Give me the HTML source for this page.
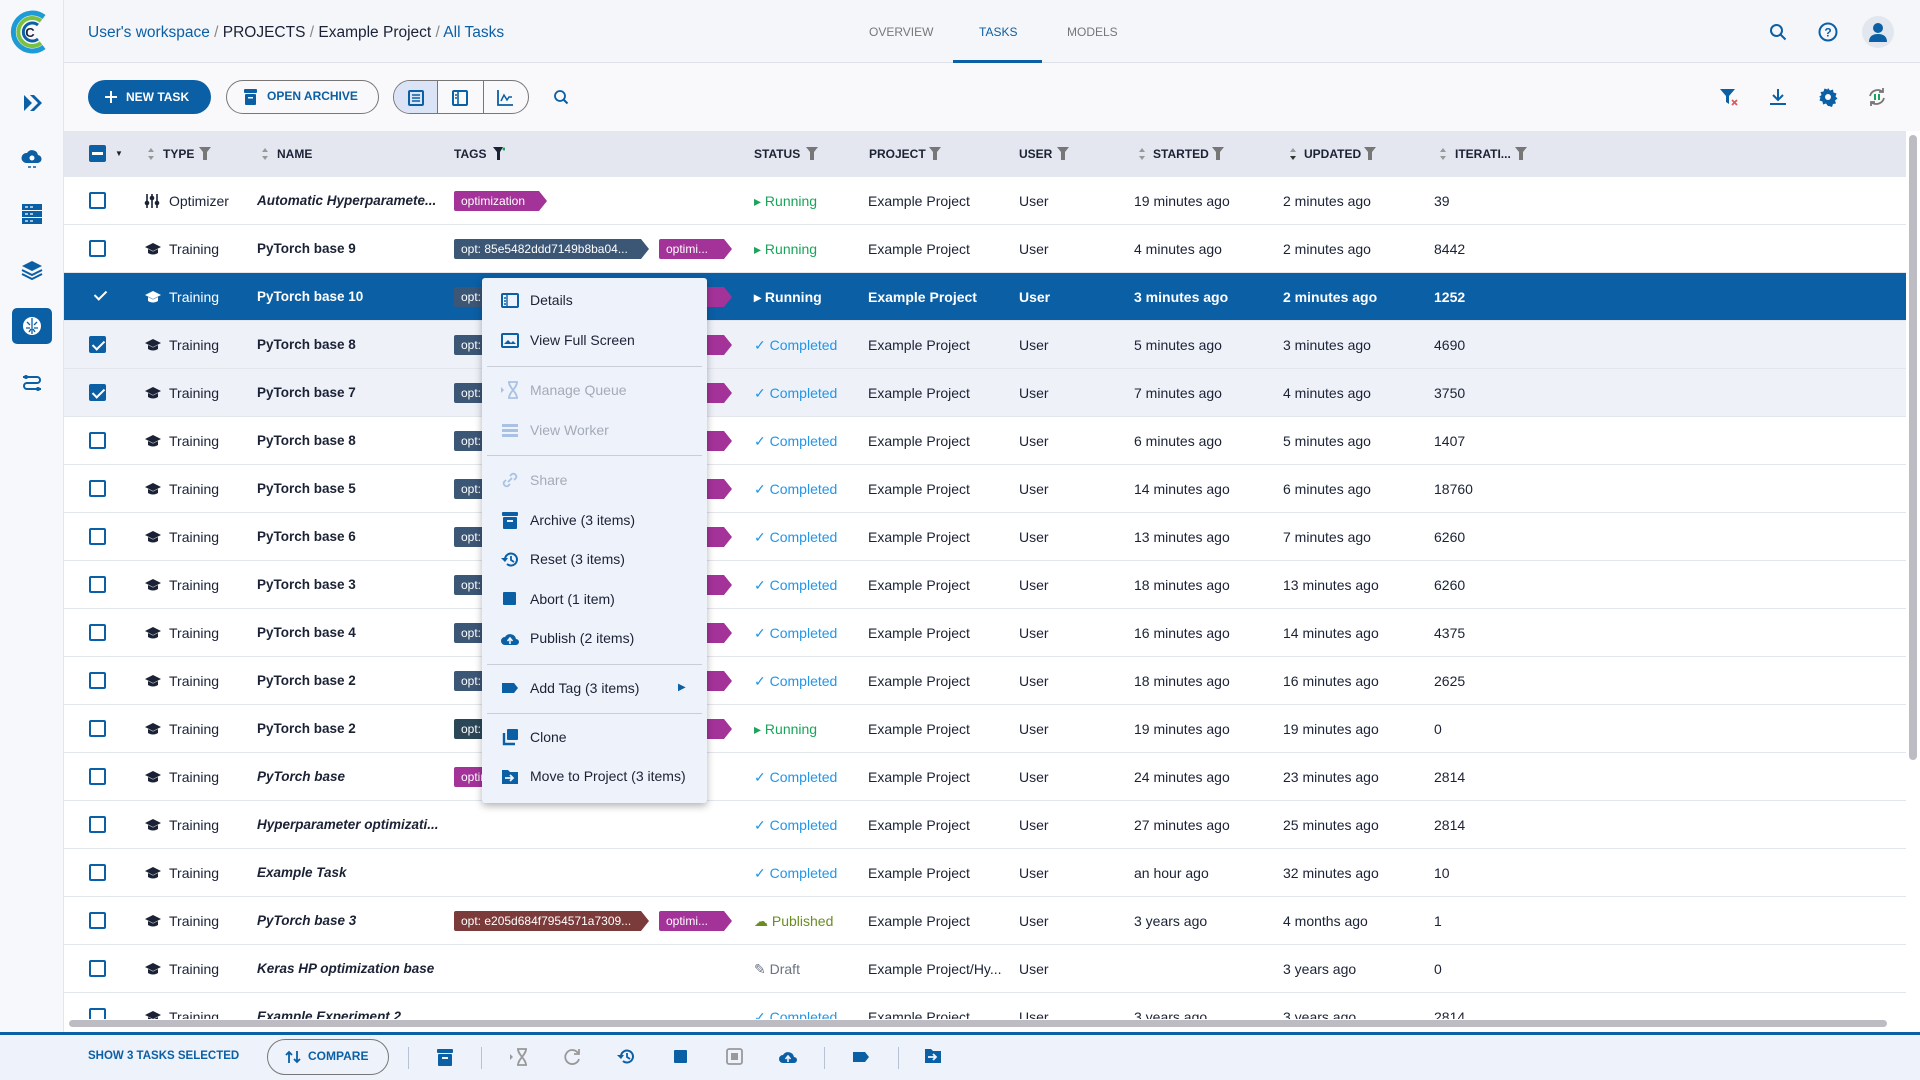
<!DOCTYPE html>
<html><head><meta charset="utf-8"><style>
*{box-sizing:border-box;margin:0;padding:0}
body{width:1920px;height:1080px;overflow:hidden;background:#f5f6fa;font-family:"Liberation Sans",sans-serif;color:#1b2235;position:relative}
.abs{position:absolute}
.side{left:0;top:0;width:64px;height:1080px;background:#f7f8fb;border-right:1px solid #e3e5ec}
.hdr{left:64px;top:0;width:1856px;height:63px;background:#f5f6fa;border-bottom:1px solid #dfe1e8}
.tb{left:64px;top:63px;width:1856px;height:68px;background:#f9f9fc}
.th{left:64px;top:131px;width:1842px;height:46px;background:#e4e7f0;font-size:12px;font-weight:bold;color:#1b2235}
.th span{position:absolute;top:16px}
.th svg{position:absolute;top:16px}
.row{position:absolute;left:64px;width:1842px;height:48px;background:#fff;border-bottom:1px solid #e4e6ee;font-size:14px}
.row.sel{background:#eef1f8}
.row.act{background:#0b5fa5;color:#fff}
.row>*{position:absolute;top:16px;white-space:nowrap}
.cb{left:25px;top:15px!important;width:17px;height:17px;border:2px solid #0b5fa5;border-radius:2px;background:#fff}
.cb.on{background:#0b5fa5}
.cb.on::after,.chk::after{content:"";position:absolute;left:4px;top:0px;width:5px;height:10px;border:solid #fff;border-width:0 2px 2px 0;transform:rotate(45deg)}
.chk{left:29px;top:15px!important;width:17px;height:17px}
.nm{left:193px;font-weight:bold;font-size:13.5px}
.it{font-style:italic}
.tag{top:14px!important;height:20px;line-height:20px;font-size:12px;color:#fff;padding:0 14px 0 7px;clip-path:polygon(0 0,calc(100% - 8px) 0,100% 50%,calc(100% - 8px) 100%,0 100%);border-radius:2px;overflow:hidden}
.pk{background:#a43399;width:73px}.dk{background:#3c5675}.br{background:#7c3b3b}.tl{background:#2b4757}
.st{left:690px}
.run{color:#1aa35a}.cmp{color:#2196e8}.pub{color:#6a8d22}.drf{color:#6b7280}
.row.act .run{color:#fff}
.c-ty{left:105px}.c-pr{left:804px}.c-us{left:955px}.c-sa{left:1070px}.c-up{left:1219px}.c-it{left:1370px}
.ico{position:absolute}
.menu{left:482px;top:278px;width:225px;height:525px;background:#eef2fa;border-radius:3px;box-shadow:0 3px 8px rgba(0,0,0,.3);font-size:14px;color:#1b2235}
.menu .mi{position:absolute;left:48px}
.menu .dis{color:#a4abb8}
.menu .dv{position:absolute;left:5px;width:215px;height:1px;background:#c9ced8}
.bot{left:0;top:1032px;width:1920px;height:48px;background:#eef2fa;border-top:3px solid #0b5fa5}
.vd{position:absolute;top:12px;width:1px;height:22px;background:#b7c2d4}
</style></head><body>

<div class="abs side"></div>
<svg class="abs" style="left:8px;top:9px" width="44" height="46" viewBox="0 0 44 46"><path d="M36 8 A19 19 0 1 0 36 38" fill="none" stroke="#1e9ad6" stroke-width="5"/><path d="M33 12 A14 14 0 1 0 33 34" fill="none" stroke="#7ac143" stroke-width="4"/><path d="M30 16 A9 9 0 1 0 30 30" fill="none" stroke="#0b5fa5" stroke-width="3"/><text x="22" y="28" font-size="13" font-weight="bold" fill="#1b2235" text-anchor="middle" font-family="Liberation Sans">C</text></svg>
<svg class="abs" style="left:22px;top:93px" width="20" height="20" viewBox="0 0 20 20"><path d="M2 2 L10 10 L2 18 Z" fill="#0b5fa5"/><path d="M8 2 h4 l8 8 -8 8 h-4 l8-8z" fill="#0b5fa5"/></svg>
<svg class="abs" style="left:20px;top:148px" width="24" height="22" viewBox="0 0 24 22"><path d="M6 15a5 5 0 0 1 1-10 6 6 0 0 1 11 2 4 4 0 0 1-1 8z" fill="#0b5fa5"/><circle cx="12" cy="10" r="2.5" fill="#fff"/><path d="M8 19h3M13 19h3" stroke="#0b5fa5" stroke-width="1.5"/></svg>
<svg class="abs" style="left:21px;top:203px" width="22" height="22" viewBox="0 0 22 22"><rect x="1" y="1" width="20" height="6" fill="#0b5fa5"/><rect x="1" y="8" width="20" height="6" fill="#0b5fa5"/><rect x="1" y="15" width="20" height="6" fill="#0b5fa5"/><path d="M4 4h3M9 4h3M4 11h3M9 11h3M4 18h3M9 18h3" stroke="#fff" stroke-width="1.2"/></svg>
<svg class="abs" style="left:21px;top:260px" width="22" height="22" viewBox="0 0 22 22"><path d="M11 1 L21 6 L11 11 L1 6Z" fill="#0b5fa5"/><path d="M1 10l10 5 10-5M1 14l10 5 10-5" fill="none" stroke="#0b5fa5" stroke-width="2"/></svg>
<div class="abs" style="left:12px;top:308px;width:40px;height:36px;background:#0b5fa5;border-radius:5px"></div>
<svg class="abs" style="left:21px;top:315px" width="22" height="22" viewBox="0 0 22 22"><circle cx="11" cy="11" r="9" fill="#fff"/><path d="M11 3v16M6 7l3 3M16 7l-3 3M5 13h4M13 13h4M8 17l2-3M14 17l-2-3" stroke="#0b5fa5" stroke-width="1.3"/></svg>
<svg class="abs" style="left:21px;top:372px" width="22" height="22" viewBox="0 0 22 22"><path d="M2 5h14a3 3 0 0 1 0 6H6a3 3 0 0 0 0 6h14" fill="none" stroke="#0b5fa5" stroke-width="2"/><circle cx="5" cy="5" r="2" fill="#0b5fa5"/><circle cx="17" cy="17" r="2" fill="#0b5fa5"/></svg>

<div class="abs hdr"></div>
<div class="abs" style="left:88px;top:24px;font-size:15.5px;white-space:nowrap"><span style="color:#0b5fa5">User's workspace</span> <span style="color:#888">/</span> PROJECTS <span style="color:#888">/</span> Example Project <span style="color:#888">/</span> <span style="color:#0b5fa5">All Tasks</span></div>
<div class="abs" style="left:869px;top:25px;font-size:12px;color:#777">OVERVIEW</div>
<div class="abs" style="left:979px;top:25px;font-size:12px;color:#0b5fa5">TASKS</div>
<div class="abs" style="left:953px;top:60px;width:89px;height:3px;background:#0b5fa5"></div>
<div class="abs" style="left:1067px;top:25px;font-size:12px;color:#777">MODELS</div>
<svg class="abs" style="left:1769px;top:23px" width="18" height="18" viewBox="0 0 18 18"><circle cx="7.5" cy="7.5" r="5.5" fill="none" stroke="#0b5fa5" stroke-width="2"/><path d="M11.5 11.5l5 5" stroke="#0b5fa5" stroke-width="2"/></svg>
<svg class="abs" style="left:1818px;top:22px" width="20" height="20" viewBox="0 0 20 20"><circle cx="10" cy="10" r="8.5" fill="none" stroke="#0b5fa5" stroke-width="2"/><text x="10" y="14.5" font-size="12" font-weight="bold" fill="#0b5fa5" text-anchor="middle" font-family="Liberation Sans">?</text></svg>
<div class="abs" style="left:1862px;top:16px;width:32px;height:32px;border-radius:50%;background:#e2e6ee"></div>
<svg class="abs" style="left:1866px;top:20px" width="24" height="24" viewBox="0 0 24 24"><circle cx="12" cy="8" r="5" fill="#0b5fa5"/><path d="M3 22c0-6 4-8 9-8s9 2 9 8z" fill="#0b5fa5"/></svg>

<div class="abs tb"></div>
<div class="abs" style="left:88px;top:80px;width:123px;height:34px;border-radius:17px;background:#0b5fa5;color:#fff;font-size:12px;font-weight:bold;line-height:34px;padding-left:38px">NEW TASK</div>
<div class="abs" style="left:105px;top:96px;width:12px;height:2px;background:#fff"></div><div class="abs" style="left:110px;top:91px;width:2px;height:12px;background:#fff"></div>
<div class="abs" style="left:226px;top:80px;width:153px;height:34px;border-radius:17px;border:1.5px solid #777;color:#0b5fa5;font-size:12px;font-weight:bold;line-height:31px;padding-left:40px">OPEN ARCHIVE</div>
<svg class="abs" style="left:244px;top:89px" width="13" height="16" viewBox="0 0 13 16"><rect x="0" y="0" width="13" height="4" rx="1" fill="#0b5fa5"/><rect x="1" y="5" width="11" height="11" rx="1" fill="#0b5fa5"/><rect x="4" y="8" width="5" height="1.5" fill="#fff"/></svg>
<div class="abs" style="left:393px;top:80px;width:136px;height:34px;border-radius:17px;border:1.5px solid #777;overflow:hidden"><div style="position:absolute;left:0;top:0;width:44px;height:34px;background:#dbe3f7;border-right:1px solid #777"></div><div style="position:absolute;left:89px;top:0;width:1px;height:34px;background:#777"></div></div>
<svg class="abs" style="left:408px;top:90px" width="16" height="16"><rect x="1" y="1" width="14" height="14" rx="1" fill="none" stroke="#0b5fa5" stroke-width="2"/><path d="M4 5h8M4 8h8M4 11h8" stroke="#0b5fa5" stroke-width="1.6"/></svg>
<svg class="abs" style="left:452px;top:90px" width="16" height="16"><rect x="1" y="1" width="14" height="14" rx="1" fill="none" stroke="#0b5fa5" stroke-width="2"/><path d="M6 1v14M3 5h2M3 8h2" stroke="#0b5fa5" stroke-width="1.6"/></svg>
<svg class="abs" style="left:497px;top:90px" width="16" height="16"><path d="M1 0v15h15" fill="none" stroke="#0b5fa5" stroke-width="1.8"/><path d="M4 11l3-6 3 5 2-3h3" fill="none" stroke="#0b5fa5" stroke-width="1.5"/></svg>
<svg class="abs" style="left:553px;top:89px" width="16" height="16"><circle cx="7" cy="7" r="5" fill="none" stroke="#0b5fa5" stroke-width="1.8"/><path d="M10.5 10.5l4 4" stroke="#0b5fa5" stroke-width="2"/></svg>
<svg class="abs" style="left:1719px;top:88px" width="20" height="18"><path d="M1 1h15l-6 7v8l-3-2v-6z" fill="#0b5fa5"/><path d="M13 12l5 5M18 12l-5 5" stroke="#e05a5a" stroke-width="1.8"/></svg>
<svg class="abs" style="left:1769px;top:88px" width="18" height="18"><path d="M9 1v11M4 7l5 5 5-5" fill="none" stroke="#0b5fa5" stroke-width="2"/><path d="M1 16h16" stroke="#0b5fa5" stroke-width="2"/></svg>
<svg class="abs" style="left:1818px;top:87px" width="20" height="20" viewBox="0 0 20 20"><path d="M10 1l2 2.5 3-1 .5 3 3 1-1 3 2 2-2.5 2 1 3-3 .5-1 3-3-1L10 19l-2-2.5-3 1-.5-3-3-1 1-3L1 10l2.5-2-1-3 3-.5 1-3 3 1z" fill="#0b5fa5"/><circle cx="10" cy="10" r="3" fill="#f9f9fc"/></svg>
<svg class="abs" style="left:1867px;top:87px" width="20" height="20" viewBox="0 0 20 20"><path d="M16 5a8 8 0 0 0-13 4M4 15a8 8 0 0 0 13-4" fill="none" stroke="#777" stroke-width="1.8"/><path d="M16 1v4h-4M4 19v-4h4" fill="none" stroke="#777" stroke-width="1.8"/><path d="M8 7v6M12 7v6" stroke="#1aa35a" stroke-width="2"/></svg>

<div class="abs th">
<div style="position:absolute;left:25px;top:14px;width:17px;height:17px;background:#0b5fa5;border-radius:2px"><div style="position:absolute;left:3px;top:7px;width:11px;height:3px;background:#fff"></div></div>
<span style="left:51px;top:18px;font-size:8px;color:#1b2235">▼</span>
<svg style="left:83px" width="8" height="14"><path d="M4 1l3 4H1zM4 13l3-4H1z" fill="#999"/></svg><span style="left:99px">TYPE</span>
<svg style="left:135px" width="12" height="13"><path d="M0 0h12L8 5v8H4V5z" fill="#777"/></svg>
<svg style="left:197px" width="8" height="14"><path d="M4 1l3 4H1zM4 13l3-4H1z" fill="#999"/></svg><span style="left:213px">NAME</span>
<span style="left:390px">TAGS</span><svg style="left:429px" width="12" height="13"><path d="M0 0h10L7 5v8H4V5z" fill="#1b2235"/><circle cx="11" cy="2" r="1.5" fill="#1aa35a"/></svg>
<span style="left:690px">STATUS</span><svg style="left:742px" width="12" height="13"><path d="M0 0h12L8 5v8H4V5z" fill="#777"/></svg>
<span style="left:805px">PROJECT</span><svg style="left:865px" width="12" height="13"><path d="M0 0h12L8 5v8H4V5z" fill="#777"/></svg>
<span style="left:955px">USER</span><svg style="left:993px" width="12" height="13"><path d="M0 0h12L8 5v8H4V5z" fill="#777"/></svg>
<svg style="left:1074px" width="8" height="14"><path d="M4 1l3 4H1zM4 13l3-4H1z" fill="#999"/></svg><span style="left:1089px">STARTED</span><svg style="left:1148px" width="12" height="13"><path d="M0 0h12L8 5v8H4V5z" fill="#777"/></svg>
<svg style="left:1225px" width="8" height="14"><path d="M4 1l3 4H1z" fill="#999"/><path d="M4 13l3-4H1z" fill="#333"/></svg><span style="left:1240px">UPDATED</span><svg style="left:1300px" width="12" height="13"><path d="M0 0h12L8 5v8H4V5z" fill="#777"/></svg>
<svg style="left:1375px" width="8" height="14"><path d="M4 1l3 4H1zM4 13l3-4H1z" fill="#999"/></svg><span style="left:1391px">ITERATI...</span><svg style="left:1451px" width="12" height="13"><path d="M0 0h12L8 5v8H4V5z" fill="#777"/></svg>
</div>

<div class="row" style="top:177px"><div class="cb"></div><svg style="left:80px;top:16px" width="16" height="16"><path d="M3 1v14M8 1v14M13 1v14" stroke="#1b2235" stroke-width="1.6"/><circle cx="3" cy="10" r="2.3" fill="#1b2235"/><circle cx="8" cy="5" r="2.3" fill="#1b2235"/><circle cx="13" cy="10" r="2.3" fill="#1b2235"/></svg><span class="c-ty">Optimizer</span><span class="nm it">Automatic Hyperparamete...</span><span class="tag pk" style="left:390px;width:93px">optimization</span><span class="st run">▸ Running</span><span class="c-pr">Example Project</span><span class="c-us">User</span><span class="c-sa">19 minutes ago</span><span class="c-up">2 minutes ago</span><span class="c-it">39</span></div>

<div class="row" style="top:225px"><div class="cb"></div><span class="c-ty">Training</span><span class="nm">PyTorch base 9</span><span class="tag dk" style="left:390px;width:195px">opt: 85e5482ddd7149b8ba04...</span><span class="tag pk" style="left:595px">optimi...</span><span class="st run">▸ Running</span><span class="c-pr">Example Project</span><span class="c-us">User</span><span class="c-sa">4 minutes ago</span><span class="c-up">2 minutes ago</span><span class="c-it">8442</span></div>

<div class="row act" style="top:273px"><div class="chk"></div><span class="c-ty">Training</span><span class="nm">PyTorch base 10</span><span class="tag dk" style="left:390px;width:195px">opt:</span><span class="tag pk" style="left:595px">optimi...</span><span class="st run" style="font-weight:bold">▸ Running</span><span class="c-pr" style="font-weight:bold">Example Project</span><span class="c-us" style="font-weight:bold">User</span><span class="c-sa" style="font-weight:bold">3 minutes ago</span><span class="c-up" style="font-weight:bold">2 minutes ago</span><span class="c-it" style="font-weight:bold">1252</span></div>

<div class="row sel" style="top:321px"><div class="cb on"></div><span class="c-ty">Training</span><span class="nm">PyTorch base 8</span><span class="tag dk" style="left:390px;width:195px">opt:</span><span class="tag pk" style="left:595px">optimi...</span><span class="st cmp">✓ Completed</span><span class="c-pr">Example Project</span><span class="c-us">User</span><span class="c-sa">5 minutes ago</span><span class="c-up">3 minutes ago</span><span class="c-it">4690</span></div>

<div class="row sel" style="top:369px"><div class="cb on"></div><span class="c-ty">Training</span><span class="nm">PyTorch base 7</span><span class="tag dk" style="left:390px;width:195px">opt:</span><span class="tag pk" style="left:595px">optimi...</span><span class="st cmp">✓ Completed</span><span class="c-pr">Example Project</span><span class="c-us">User</span><span class="c-sa">7 minutes ago</span><span class="c-up">4 minutes ago</span><span class="c-it">3750</span></div>

<div class="row" style="top:417px"><div class="cb"></div><span class="c-ty">Training</span><span class="nm">PyTorch base 8</span><span class="tag dk" style="left:390px;width:195px">opt:</span><span class="tag pk" style="left:595px">optimi...</span><span class="st cmp">✓ Completed</span><span class="c-pr">Example Project</span><span class="c-us">User</span><span class="c-sa">6 minutes ago</span><span class="c-up">5 minutes ago</span><span class="c-it">1407</span></div>

<div class="row" style="top:465px"><div class="cb"></div><span class="c-ty">Training</span><span class="nm">PyTorch base 5</span><span class="tag dk" style="left:390px;width:195px">opt:</span><span class="tag pk" style="left:595px">optimi...</span><span class="st cmp">✓ Completed</span><span class="c-pr">Example Project</span><span class="c-us">User</span><span class="c-sa">14 minutes ago</span><span class="c-up">6 minutes ago</span><span class="c-it">18760</span></div>

<div class="row" style="top:513px"><div class="cb"></div><span class="c-ty">Training</span><span class="nm">PyTorch base 6</span><span class="tag dk" style="left:390px;width:195px">opt:</span><span class="tag pk" style="left:595px">optimi...</span><span class="st cmp">✓ Completed</span><span class="c-pr">Example Project</span><span class="c-us">User</span><span class="c-sa">13 minutes ago</span><span class="c-up">7 minutes ago</span><span class="c-it">6260</span></div>

<div class="row" style="top:561px"><div class="cb"></div><span class="c-ty">Training</span><span class="nm">PyTorch base 3</span><span class="tag dk" style="left:390px;width:195px">opt:</span><span class="tag pk" style="left:595px">optimi...</span><span class="st cmp">✓ Completed</span><span class="c-pr">Example Project</span><span class="c-us">User</span><span class="c-sa">18 minutes ago</span><span class="c-up">13 minutes ago</span><span class="c-it">6260</span></div>

<div class="row" style="top:609px"><div class="cb"></div><span class="c-ty">Training</span><span class="nm">PyTorch base 4</span><span class="tag dk" style="left:390px;width:195px">opt:</span><span class="tag pk" style="left:595px">optimi...</span><span class="st cmp">✓ Completed</span><span class="c-pr">Example Project</span><span class="c-us">User</span><span class="c-sa">16 minutes ago</span><span class="c-up">14 minutes ago</span><span class="c-it">4375</span></div>

<div class="row" style="top:657px"><div class="cb"></div><span class="c-ty">Training</span><span class="nm">PyTorch base 2</span><span class="tag dk" style="left:390px;width:195px">opt:</span><span class="tag pk" style="left:595px">optimi...</span><span class="st cmp">✓ Completed</span><span class="c-pr">Example Project</span><span class="c-us">User</span><span class="c-sa">18 minutes ago</span><span class="c-up">16 minutes ago</span><span class="c-it">2625</span></div>

<div class="row" style="top:705px"><div class="cb"></div><span class="c-ty">Training</span><span class="nm">PyTorch base 2</span><span class="tag tl" style="left:390px;width:195px">opt:</span><span class="tag pk" style="left:595px">optimi...</span><span class="st run">▸ Running</span><span class="c-pr">Example Project</span><span class="c-us">User</span><span class="c-sa">19 minutes ago</span><span class="c-up">19 minutes ago</span><span class="c-it">0</span></div>

<div class="row" style="top:753px"><div class="cb"></div><span class="c-ty">Training</span><span class="nm it">PyTorch base</span><span class="tag pk" style="left:390px">optimi</span><span class="st cmp">✓ Completed</span><span class="c-pr">Example Project</span><span class="c-us">User</span><span class="c-sa">24 minutes ago</span><span class="c-up">23 minutes ago</span><span class="c-it">2814</span></div>

<div class="row" style="top:801px"><div class="cb"></div><span class="c-ty">Training</span><span class="nm it">Hyperparameter optimizati...</span><span class="st cmp">✓ Completed</span><span class="c-pr">Example Project</span><span class="c-us">User</span><span class="c-sa">27 minutes ago</span><span class="c-up">25 minutes ago</span><span class="c-it">2814</span></div>

<div class="row" style="top:849px"><div class="cb"></div><span class="c-ty">Training</span><span class="nm it">Example Task</span><span class="st cmp">✓ Completed</span><span class="c-pr">Example Project</span><span class="c-us">User</span><span class="c-sa">an hour ago</span><span class="c-up">32 minutes ago</span><span class="c-it">10</span></div>

<div class="row" style="top:897px"><div class="cb"></div><span class="c-ty">Training</span><span class="nm it">PyTorch base 3</span><span class="tag br" style="left:390px;width:195px">opt: e205d684f7954571a7309...</span><span class="tag pk" style="left:595px">optimi...</span><span class="st pub">☁ Published</span><span class="c-pr">Example Project</span><span class="c-us">User</span><span class="c-sa">3 years ago</span><span class="c-up">4 months ago</span><span class="c-it">1</span></div>

<div class="row" style="top:945px"><div class="cb"></div><span class="c-ty">Training</span><span class="nm it">Keras HP optimization base</span><span class="st drf">✎ Draft</span><span class="c-pr">Example Project/Hy...</span><span class="c-us">User</span><span class="c-up">3 years ago</span><span class="c-it">0</span></div>

<div class="row" style="top:993px"><div class="cb"></div><span class="c-ty">Training</span><span class="nm it">Example Experiment 2</span><span class="st cmp">✓ Completed</span><span class="c-pr">Example Project</span><span class="c-us">User</span><span class="c-sa">3 years ago</span><span class="c-up">3 years ago</span><span class="c-it">2814</span></div>

<style>.tr{position:absolute;left:144px;width:18px;height:14px}</style>
<svg class="tr" style="top:242px" viewBox="0 0 18 14"><path d="M9 1L17 5 9 9 1 5z" fill="#1b2235"/><path d="M4 7v4c3 2 7 2 10 0V7l-5 2.5z" fill="#1b2235"/></svg>
<svg class="tr" style="top:290px" viewBox="0 0 18 14"><path d="M9 1L17 5 9 9 1 5z" fill="#fff"/><path d="M4 7v4c3 2 7 2 10 0V7l-5 2.5z" fill="#fff"/></svg>
<svg class="tr" style="top:338px" viewBox="0 0 18 14"><path d="M9 1L17 5 9 9 1 5z" fill="#1b2235"/><path d="M4 7v4c3 2 7 2 10 0V7l-5 2.5z" fill="#1b2235"/></svg>
<svg class="tr" style="top:386px" viewBox="0 0 18 14"><path d="M9 1L17 5 9 9 1 5z" fill="#1b2235"/><path d="M4 7v4c3 2 7 2 10 0V7l-5 2.5z" fill="#1b2235"/></svg>
<svg class="tr" style="top:434px" viewBox="0 0 18 14"><path d="M9 1L17 5 9 9 1 5z" fill="#1b2235"/><path d="M4 7v4c3 2 7 2 10 0V7l-5 2.5z" fill="#1b2235"/></svg>
<svg class="tr" style="top:482px" viewBox="0 0 18 14"><path d="M9 1L17 5 9 9 1 5z" fill="#1b2235"/><path d="M4 7v4c3 2 7 2 10 0V7l-5 2.5z" fill="#1b2235"/></svg>
<svg class="tr" style="top:530px" viewBox="0 0 18 14"><path d="M9 1L17 5 9 9 1 5z" fill="#1b2235"/><path d="M4 7v4c3 2 7 2 10 0V7l-5 2.5z" fill="#1b2235"/></svg>
<svg class="tr" style="top:578px" viewBox="0 0 18 14"><path d="M9 1L17 5 9 9 1 5z" fill="#1b2235"/><path d="M4 7v4c3 2 7 2 10 0V7l-5 2.5z" fill="#1b2235"/></svg>
<svg class="tr" style="top:626px" viewBox="0 0 18 14"><path d="M9 1L17 5 9 9 1 5z" fill="#1b2235"/><path d="M4 7v4c3 2 7 2 10 0V7l-5 2.5z" fill="#1b2235"/></svg>
<svg class="tr" style="top:674px" viewBox="0 0 18 14"><path d="M9 1L17 5 9 9 1 5z" fill="#1b2235"/><path d="M4 7v4c3 2 7 2 10 0V7l-5 2.5z" fill="#1b2235"/></svg>
<svg class="tr" style="top:722px" viewBox="0 0 18 14"><path d="M9 1L17 5 9 9 1 5z" fill="#1b2235"/><path d="M4 7v4c3 2 7 2 10 0V7l-5 2.5z" fill="#1b2235"/></svg>
<svg class="tr" style="top:770px" viewBox="0 0 18 14"><path d="M9 1L17 5 9 9 1 5z" fill="#1b2235"/><path d="M4 7v4c3 2 7 2 10 0V7l-5 2.5z" fill="#1b2235"/></svg>
<svg class="tr" style="top:818px" viewBox="0 0 18 14"><path d="M9 1L17 5 9 9 1 5z" fill="#1b2235"/><path d="M4 7v4c3 2 7 2 10 0V7l-5 2.5z" fill="#1b2235"/></svg>
<svg class="tr" style="top:866px" viewBox="0 0 18 14"><path d="M9 1L17 5 9 9 1 5z" fill="#1b2235"/><path d="M4 7v4c3 2 7 2 10 0V7l-5 2.5z" fill="#1b2235"/></svg>
<svg class="tr" style="top:914px" viewBox="0 0 18 14"><path d="M9 1L17 5 9 9 1 5z" fill="#1b2235"/><path d="M4 7v4c3 2 7 2 10 0V7l-5 2.5z" fill="#1b2235"/></svg>
<svg class="tr" style="top:962px" viewBox="0 0 18 14"><path d="M9 1L17 5 9 9 1 5z" fill="#1b2235"/><path d="M4 7v4c3 2 7 2 10 0V7l-5 2.5z" fill="#1b2235"/></svg>
<svg class="tr" style="top:1010px" viewBox="0 0 18 14"><path d="M9 1L17 5 9 9 1 5z" fill="#1b2235"/><path d="M4 7v4c3 2 7 2 10 0V7l-5 2.5z" fill="#1b2235"/></svg>

<div class="abs" style="left:64px;top:1019px;width:1856px;height:13px;background:#fff"></div>
<div class="abs" style="left:69px;top:1020px;width:1818px;height:7px;border-radius:4px;background:#bcbcc2"></div>
<div class="abs" style="left:1906px;top:131px;width:14px;height:888px;background:#fff"></div>
<div class="abs" style="left:1909px;top:135px;width:8px;height:625px;border-radius:4px;background:#bcbcc2"></div>

<div class="abs menu">
<svg class="ico" style="left:19px;top:15px" width="18" height="15"><rect x="1" y="1" width="16" height="13" rx="1" fill="none" stroke="#0b5fa5" stroke-width="2"/><path d="M6 1v13M3 5h2M3 8h2M3 11h2" stroke="#0b5fa5" stroke-width="1.4"/></svg>
<span class="mi" style="top:14px">Details</span>
<svg class="ico" style="left:19px;top:55px" width="18" height="15"><rect x="1" y="1" width="16" height="13" rx="1" fill="none" stroke="#0b5fa5" stroke-width="2"/><path d="M3 11l4-4 3 3 2-2 3 3z" fill="#0b5fa5"/></svg>
<span class="mi" style="top:54px">View Full Screen</span>
<div class="dv" style="top:88px"></div>
<svg class="ico" style="left:18px;top:103px" width="20" height="18"><path d="M1 6l3 3-3 3z" fill="#a9c2e4"/><path d="M8 1h10M8 17h10M9 1c0 6 8 10 8 16M17 1c0 6-8 10-8 16" fill="none" stroke="#a9c2e4" stroke-width="1.8"/></svg>
<span class="mi dis" style="top:104px">Manage Queue</span>
<svg class="ico" style="left:19px;top:145px" width="18" height="15"><rect x="1" y="1" width="16" height="3" fill="#a9c2e4"/><rect x="1" y="6" width="16" height="3" fill="#a9c2e4"/><rect x="1" y="11" width="16" height="3" fill="#a9c2e4"/></svg>
<span class="mi dis" style="top:144px">View Worker</span>
<div class="dv" style="top:177px"></div>
<svg class="ico" style="left:19px;top:193px" width="18" height="18"><path d="M7 11l4-4M5 9l-2 2a3 3 0 0 0 4 4l2-2M13 9l2-2a3 3 0 0 0-4-4l-2 2" fill="none" stroke="#a9c2e4" stroke-width="1.8"/></svg>
<span class="mi dis" style="top:194px">Share</span>
<svg class="ico" style="left:20px;top:234px" width="16" height="17"><rect x="0" y="0" width="16" height="4" rx="1" fill="#0b5fa5"/><rect x="1" y="5" width="14" height="12" rx="1" fill="#0b5fa5"/><rect x="5" y="8" width="6" height="2" fill="#eef2fa"/></svg>
<span class="mi" style="top:234px">Archive (3 items)</span>
<svg class="ico" style="left:19px;top:273px" width="18" height="17"><path d="M4 8a6 6 0 1 1 2 5" fill="none" stroke="#0b5fa5" stroke-width="2"/><path d="M0 7l4 4 3-4z" fill="#0b5fa5"/><path d="M10 5v4l3 2" fill="none" stroke="#0b5fa5" stroke-width="1.8"/></svg>
<span class="mi" style="top:273px">Reset (3 items)</span>
<div class="ico" style="left:21px;top:314px;width:13px;height:13px;background:#0b5fa5;border-radius:1px"></div>
<span class="mi" style="top:313px">Abort (1 item)</span>
<svg class="ico" style="left:18px;top:353px" width="20" height="15"><path d="M5 14a4 4 0 0 1 0-8 6 6 0 0 1 11 2 3 3 0 0 1 0 6z" fill="#0b5fa5"/><path d="M10 13V8M7.5 10l2.5-3 2.5 3" fill="none" stroke="#eef2fa" stroke-width="1.6"/></svg>
<span class="mi" style="top:352px">Publish (2 items)</span>
<div class="dv" style="top:386px"></div>
<svg class="ico" style="left:19px;top:404px" width="18" height="12"><path d="M1 1h12l4 5-4 5H1z" fill="#0b5fa5"/></svg>
<span class="mi" style="top:402px">Add Tag (3 items)</span>
<span class="ico" style="left:196px;top:404px;color:#0b5fa5;font-size:10px">▶</span>
<div class="dv" style="top:435px"></div>
<svg class="ico" style="left:19px;top:450px" width="18" height="18"><rect x="6" y="1" width="11" height="11" rx="1" fill="#0b5fa5"/><path d="M3 5v11h11" fill="none" stroke="#0b5fa5" stroke-width="2.4"/></svg>
<span class="mi" style="top:451px">Clone</span>
<svg class="ico" style="left:19px;top:491px" width="18" height="16"><path d="M1 1h6l2 2h8v12H1z" fill="#0b5fa5"/><path d="M4 9h8M9 6l3 3-3 3" fill="none" stroke="#eef2fa" stroke-width="1.8"/></svg>
<span class="mi" style="top:490px">Move to Project (3 items)</span>
</div>

<div class="abs bot">
<span style="position:absolute;left:88px;top:15px;font-size:11.5px;font-weight:bold;color:#0b5fa5">SHOW 3 TASKS SELECTED</span>
<div style="position:absolute;left:267px;top:4px;width:122px;height:36px;border:1.5px solid #777;border-radius:18px;color:#0b5fa5;font-size:12px;font-weight:bold;line-height:33px;padding-left:40px">COMPARE</div>
<svg style="position:absolute;left:285px;top:14px" width="16" height="16"><path d="M4 14V3M1 6l3-3 3 3M12 2v11M9 10l3 3 3-3" fill="none" stroke="#0b5fa5" stroke-width="1.8"/></svg>
<div class="vd" style="left:408px"></div>
<svg style="position:absolute;left:437px;top:14px" width="16" height="17"><rect x="0" y="0" width="16" height="4" rx="1" fill="#0b5fa5"/><rect x="1" y="5" width="14" height="12" rx="1" fill="#0b5fa5"/><rect x="5" y="8" width="6" height="2" fill="#eef2fa"/></svg>
<div class="vd" style="left:481px"></div>
<svg style="position:absolute;left:509px;top:13px" width="20" height="18"><path d="M1 6l3 3-3 3z" fill="#999"/><path d="M8 1h10M8 17h10M9 1c0 6 8 10 8 16M17 1c0 6-8 10-8 16" fill="none" stroke="#999" stroke-width="1.8"/></svg>
<svg style="position:absolute;left:563px;top:13px" width="18" height="18"><path d="M15 5a7 7 0 1 0 1 6" fill="none" stroke="#999" stroke-width="1.8"/><path d="M16 1v5h-5" fill="none" stroke="#999" stroke-width="1.8"/></svg>
<svg style="position:absolute;left:617px;top:13px" width="18" height="17"><path d="M4 8a6 6 0 1 1 2 5" fill="none" stroke="#0b5fa5" stroke-width="2"/><path d="M0 7l4 4 3-4z" fill="#0b5fa5"/><path d="M10 5v4l3 2" fill="none" stroke="#0b5fa5" stroke-width="1.8"/></svg>
<div style="position:absolute;left:674px;top:15px;width:13px;height:13px;background:#0b5fa5;border-radius:1px"></div>
<svg style="position:absolute;left:726px;top:13px" width="17" height="17"><rect x="1" y="1" width="15" height="15" rx="2" fill="none" stroke="#999" stroke-width="1.8"/><rect x="5" y="5" width="7" height="7" fill="#999"/></svg>
<svg style="position:absolute;left:778px;top:14px" width="20" height="15"><path d="M5 14a4 4 0 0 1 0-8 6 6 0 0 1 11 2 3 3 0 0 1 0 6z" fill="#0b5fa5"/><path d="M10 13V8M7.5 10l2.5-3 2.5 3" fill="none" stroke="#eef2fa" stroke-width="1.6"/></svg>
<div class="vd" style="left:824px"></div>
<svg style="position:absolute;left:852px;top:16px" width="18" height="12"><path d="M1 1h12l4 5-4 5H1z" fill="#0b5fa5"/></svg>
<div class="vd" style="left:898px"></div>
<svg style="position:absolute;left:924px;top:13px" width="18" height="16"><path d="M1 1h6l2 2h8v12H1z" fill="#0b5fa5"/><path d="M4 9h8M9 6l3 3-3 3" fill="none" stroke="#eef2fa" stroke-width="1.8"/></svg>
</div>
</body></html>
